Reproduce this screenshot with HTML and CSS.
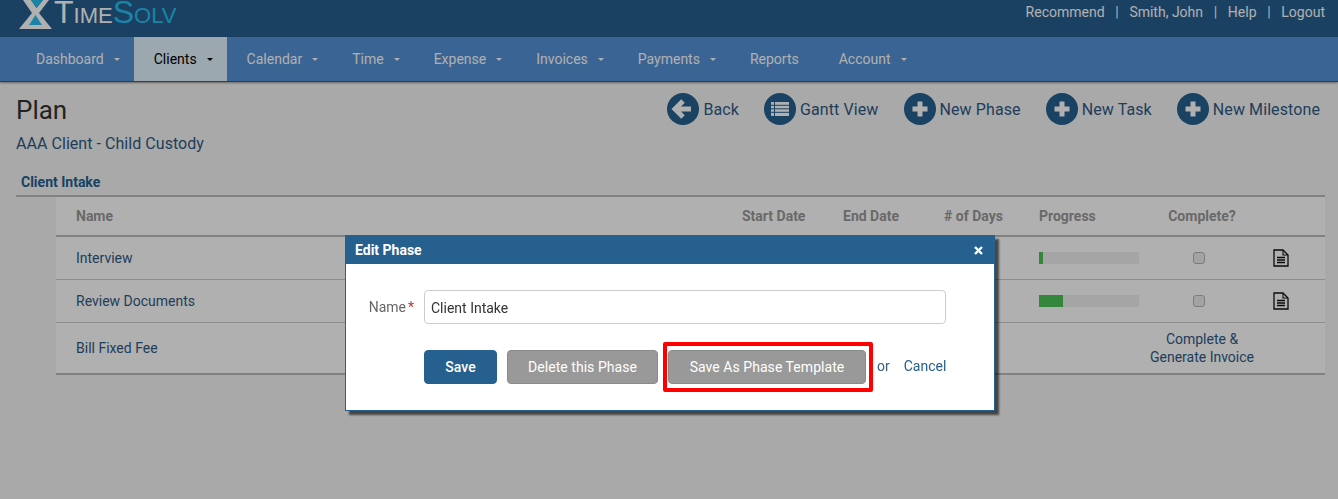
FILE: index.html
```html
<!DOCTYPE html>
<html lang="en">
<head>
  <meta charset="UTF-8">
  <meta name="viewport" content="width=device-width, initial-scale=1.0">
  <title>TimeSolv - Plan</title>
  <link rel="stylesheet" href="styles.css">
</head>
<body>
  <svg class="defs" width="0" height="0">
    <symbol id="doc" viewBox="0 0 16 18">
      <path d="M1 1h9l5 5v11H1z" fill="none" stroke="currentColor" stroke-width="1.300"/>
      <path d="M10 1v5h5" fill="none" stroke="currentColor" stroke-width="1.100"/>
      <path d="M4 8.500h8M4 11h8M4 13.500h8" stroke="currentColor" stroke-width="1.300"/>
    </symbol>
    <symbol id="plus" viewBox="0 0 32 32">
      <circle cx="16" cy="16" r="16" fill="currentColor"/>
      <path d="M16 8.500v15M8.500 16h15" stroke="#fff" stroke-width="5"/>
    </symbol>
  </svg>

  <header class="topbar">
    <a class="logo">
      <svg class="logo-mark" width="35" height="30" viewBox="0 0 35 30">
        <path d="M4 0H12L17.500 8 24 0H30L20 13 33 29H0L13 13Z" fill="#fff"/>
        <path d="M10 25H23L16.500 15Z" fill="#27c0f2"/>
        <path d="M12 0H24L17.500 8Z" fill="#27c0f2"/>
      </svg>
      <span class="logo-text">T<small>IME</small><em>S<small>OLV</small></em></span>
    </a>
    <nav class="user-links">
      <a>Recommend</a><span>|</span><a>Smith, John</a><span>|</span><a>Help</a><span>|</span><a>Logout</a>
    </nav>
  </header>

  <nav class="mainnav">
    <a class="nav-item caret">Dashboard</a>
    <a class="nav-item caret active">Clients</a>
    <a class="nav-item caret">Calendar</a>
    <a class="nav-item caret">Time</a>
    <a class="nav-item caret">Expense</a>
    <a class="nav-item caret">Invoices</a>
    <a class="nav-item caret">Payments</a>
    <a class="nav-item">Reports</a>
    <a class="nav-item caret">Account</a>
  </nav>

  <main class="page">
    <div class="page-head">
      <div>
        <h1>Plan</h1>
        <p class="matter">AAA Client - Child Custody</p>
      </div>
      <div class="actions">
        <a class="action">
          <svg width="32" height="32" viewBox="0 0 32 32">
            <circle cx="16" cy="16" r="16" fill="currentColor"/>
            <path d="M16 8l-8 8 8 8M9 16h15" fill="none" stroke="#fff" stroke-width="5"/>
          </svg>Back</a>
        <a class="action">
          <svg width="32" height="32" viewBox="0 0 32 32">
            <circle cx="16" cy="16" r="16" fill="currentColor"/>
            <path d="M7 9h18v14H7z" fill="#fff"/>
            <path d="M7 12.300h18M7 15.800h18M7 19.300h18M10.500 9v14" stroke="currentColor"/>
          </svg>Gantt View</a>
        <a class="action"><svg width="32" height="32"><use href="#plus"/></svg>New Phase</a>
        <a class="action"><svg width="32" height="32"><use href="#plus"/></svg>New Task</a>
        <a class="action"><svg width="32" height="32"><use href="#plus"/></svg>New Milestone</a>
      </div>
    </div>

    <h2 class="phase">Client Intake</h2>
    <div class="tasks">
      <div class="row head">
        <span>Name</span><span>Start Date</span><span>End Date</span><span># of Days</span><span>Progress</span><span class="center">Complete?</span><span></span>
      </div>
      <div class="row">
        <a>Interview</a><span></span><span></span><span></span>
        <div class="bar"><div class="bar-fill" style="width: 4%"></div></div>
        <span><input class="check" type="checkbox"></span>
        <svg class="doc" width="16" height="18"><use href="#doc"/></svg>
      </div>
      <div class="row">
        <a>Review Documents</a><span></span><span></span><span></span>
        <div class="bar"><div class="bar-fill" style="width: 24%"></div></div>
        <span><input class="check" type="checkbox"></span>
        <svg class="doc" width="16" height="18"><use href="#doc"/></svg>
      </div>
      <div class="row last">
        <a>Bill Fixed Fee</a><span></span><span></span><span></span><span></span>
        <a class="center generate">Complete &amp; Generate Invoice</a><span></span>
      </div>
    </div>
  </main>

  <div class="overlay"></div>

  <div class="modal">
    <div class="modal-title">
      <span>Edit Phase</span>
      <svg width="9" height="9" viewBox="0 0 9 9"><path d="M1 1l7 7M8 1l-7 7" stroke="#fff" stroke-width="2.400"/></svg>
    </div>
    <div class="modal-body">
      <div class="field">
        <label>Name<b>*</b></label>
        <input class="text-input" type="text" value="Client Intake">
      </div>
      <div class="buttons">
        <button class="btn primary">Save</button>
        <button class="btn">Delete this Phase</button>
        <button class="btn marked">Save As Phase Template</button>
        <span class="or">or</span>
        <a class="cancel">Cancel</a>
      </div>
    </div>
  </div>
</body>
</html>
```

FILE: styles.css
```css
* {
  box-sizing: border-box;
}
body {
  font-family: Roboto, "Liberation Sans", sans-serif;
  font-size: 14px;
  background-color: #f5f5f5;
  color: #333;
  margin: 0;
  height: 499px;
  overflow: hidden;
}
.defs {
  display: block;
  height: 0;
}

/* top bar */
.topbar {
  height: 37px;
  background: #275e8f;
  display: flex;
  justify-content: space-between;
  padding: 0 13px 0 19px;
  overflow: hidden;
}
.logo {
  display: flex;
}
.logo-text {
  font-family: "Liberation Sans", sans-serif;
  font-size: 32px;
  line-height: 24px;
  color: #fff;
}
.logo-text small {
  font-size: 22px;
}
.logo-text em {
  font-style: normal;
  color: #27c0f2;
}
.user-links {
  display: flex;
  color: #fff;
  line-height: 25px;
}
.user-links span {
  margin: 0 10.7px;
}

/* main nav */
.mainnav {
  height: 45px;
  background: #5492d5;
  border-bottom: 1px solid #555;
  display: flex;
  padding-left: 16px;
  box-shadow: 0 1px 2px rgba(0,0,0,0.4);
}
.nav-item {
  color: #fff;
  line-height: 44px;
  padding: 0 20px;
  display: flex;
  align-items: center;
}
.nav-item.caret {
  padding-right: 14px;
}
.nav-item.caret::after {
  content: "";
  margin-left: 10px;
  border-top: 3px solid currentColor;
  border-left: 3px solid transparent;
  border-right: 3px solid transparent;
}
.nav-item.active {
  background: #e2f3ff;
  color: #000;
}

/* page */
.page {
  padding: 0 13px 0 16px;
}
.page-head {
  display: flex;
  justify-content: space-between;
  height: 89px;
}
h1 {
  font-size: 26px;
  font-weight: 400;
  line-height: 30px;
  margin: 13px 0 0;
}
.matter {
  font-size: 16px;
  line-height: 20px;
  letter-spacing: 0.05px;
  color: #2f5a85;
  margin: 9px 0 0;
}
.actions {
  display: flex;
  align-items: flex-start;
  gap: 25px;
  padding: 11px 5px 0 0;
}
.action {
  display: flex;
  align-items: center;
  gap: 4px;
  font-size: 16px;
  letter-spacing: 0.1px;
  color: #2f5a85;
}
.action svg {
  color: #26608f;
}
.phase {
  font-size: 14px;
  font-weight: 700;
  line-height: 22px;
  color: #26608f;
  margin: 0;
  padding: 0 0 2px 5px;
  border-bottom: 2px solid #bbb;
}
.tasks {
  margin-left: 40px;
  background: #fff;
}
.row {
  display: grid;
  grid-template-columns: 666px 101px 101px 95px 103px 120px 1fr;
  align-items: center;
  height: 43px;
  padding-left: 20px;
  border-bottom: 1px solid #ccc;
}
.row a {
  color: #2f5a85;
}
.row.head {
  height: 40px;
  font-weight: 700;
  color: #999;
  border-bottom: 2px solid #bbb;
}
.row.last {
  height: 52px;
  border-bottom: 2px solid #bbb;
}
.center {
  text-align: center;
}
.generate {
  line-height: 18px;
}
.bar {
  width: 100px;
  height: 12px;
  background: #f0f0f0;
}
.bar-fill {
  height: 12px;
  background: #4cc355;
}
.check {
  appearance: none;
  display: block;
  width: 12px;
  height: 12px;
  margin: 0 0 0 51px;
  border: 1px solid #b5b5b5;
  border-radius: 3px;
  background: #ececec;
}
.doc {
  margin-left: 11px;
  color: #111;
}

/* dialog */
.overlay {
  position: fixed;
  inset: 0;
  background: rgba(0,0,0,0.31);
}
.modal {
  position: fixed;
  left: 345px;
  top: 235px;
  width: 650px;
  height: 176px;
  background: #fff;
  border: 1px solid #26608f;
  box-shadow: 4px 4px 2px rgba(0,0,0,0.6);
}
.modal-title {
  height: 28px;
  background: #26608f;
  color: #fff;
  font-weight: 700;
  display: flex;
  align-items: center;
  justify-content: space-between;
  padding: 0 11px 0 9px;
}
.modal-body {
  padding: 26px 0 0 78px;
}
.field {
  display: flex;
  align-items: center;
}
.field label {
  flex: none;
  width: 65px;
  margin-left: -65px;
  padding-right: 10px;
  text-align: right;
  color: #666;
  white-space: nowrap;
}
.field b {
  color: #b33;
  font-weight: 400;
  margin-left: 2px;
}
.text-input {
  width: 522px;
  height: 34px;
  border: 1px solid #ccc;
  border-radius: 4px;
  padding: 2px 6px 0;
  font: 14px Roboto, sans-serif;
  color: #333;
}
.buttons {
  display: flex;
  align-items: center;
  margin-top: 26px;
}
.btn {
  position: relative;
  height: 34px;
  padding: 0 20px;
  margin-right: 10px;
  border: 1px solid #8a8a8a;
  border-radius: 4px;
  background: #999;
  color: #fff;
  font: 400 14px Roboto, sans-serif;
  letter-spacing: 0.05px;
}
.btn.primary {
  width: 73px;
  padding: 0;
  background: #26608f;
  border-color: #26608f;
  font-weight: 500;
}
.btn.marked {
  width: 198px;
  padding: 0;
}
.btn.marked::after {
  content: "";
  position: absolute;
  inset: -9px -8px -9px -6px;
  border: 4px solid #f00;
  border-radius: 2px;
}
.or {
  margin: 0 0 2px 1px;
  color: #3a5c7c;
}
.cancel {
  margin: 0 0 2px 14px;
  color: #26608f;
}
```
